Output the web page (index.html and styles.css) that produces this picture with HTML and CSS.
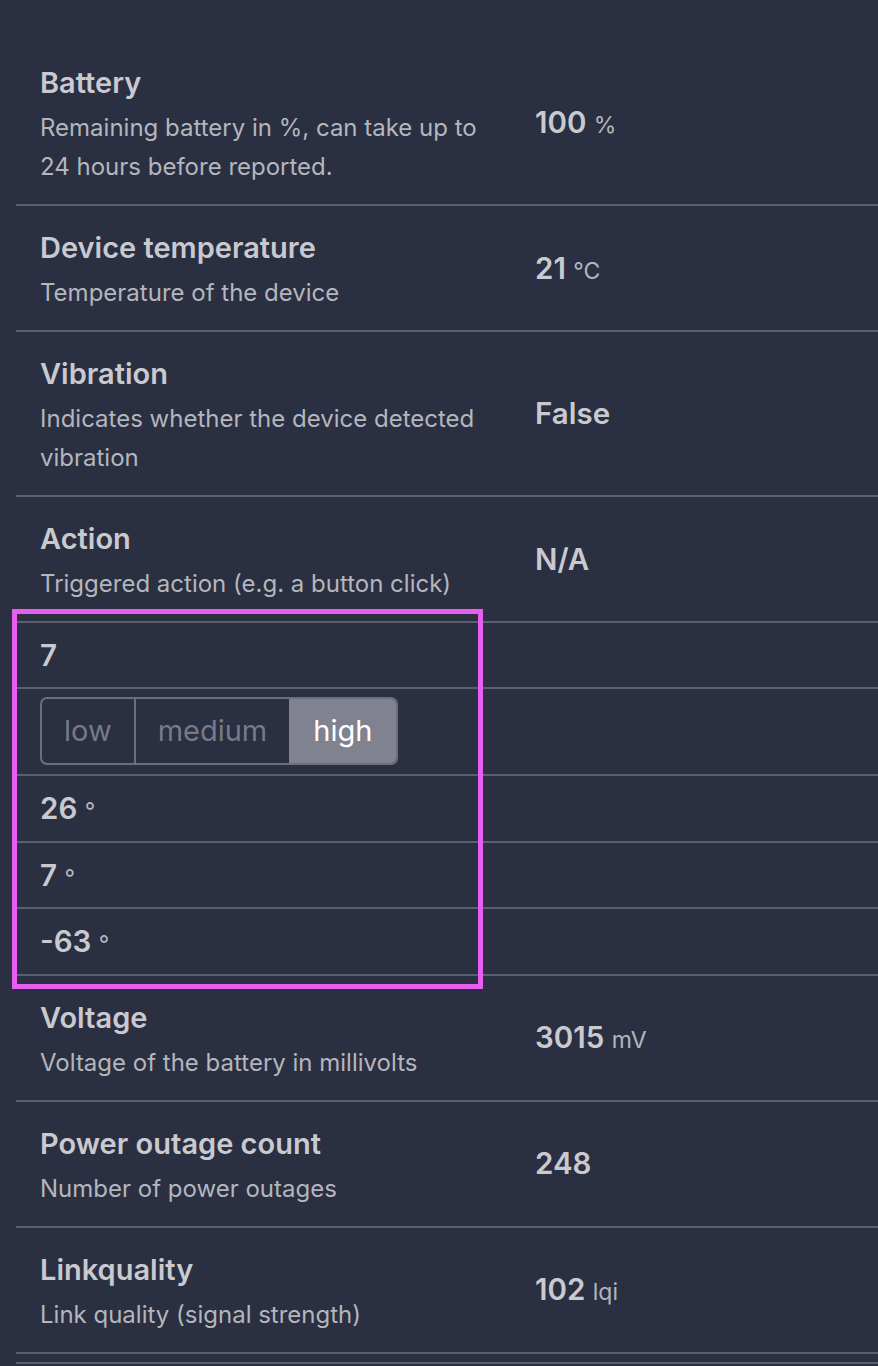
FILE: index.html
```html
<!DOCTYPE html>
<html>
<head>
<meta charset="utf-8">
<link rel="stylesheet" href="styles.css">
</head>
<body>
<div class="page">
  <div class="list">
    <div class="row">
      <div class="info">
        <div class="title">Battery</div>
        <div class="desc">Remaining battery in %, can take up to 24 hours before reported.</div>
      </div>
      <div class="value">100 <span class="unit">%</span></div>
    </div>
    <div class="row">
      <div class="info">
        <div class="title">Device temperature</div>
        <div class="desc">Temperature of the device</div>
      </div>
      <div class="value">21 <span class="unit">°C</span></div>
    </div>
    <div class="row">
      <div class="info">
        <div class="title">Vibration</div>
        <div class="desc">Indicates whether the device detected vibration</div>
      </div>
      <div class="value">False</div>
    </div>
    <div class="row">
      <div class="info">
        <div class="title">Action</div>
        <div class="desc">Triggered action (e.g. a button click)</div>
      </div>
      <div class="value">N/A</div>
    </div>
    <div class="row compact">
      <div class="value">7</div>
    </div>
    <div class="row compact toggle-row">
      <div class="seg">
        <span class="seg-btn">low</span>
        <span class="seg-btn">medium</span>
        <span class="seg-btn active">high</span>
      </div>
    </div>
    <div class="row compact deg">
      <div class="value">26 <span class="unit">°</span></div>
    </div>
    <div class="row compact deg">
      <div class="value">7 <span class="unit">°</span></div>
    </div>
    <div class="row compact deg">
      <div class="value">-63 <span class="unit">°</span></div>
    </div>
    <div class="row">
      <div class="info">
        <div class="title">Voltage</div>
        <div class="desc">Voltage of the battery in millivolts</div>
      </div>
      <div class="value">3015 <span class="unit">mV</span></div>
    </div>
    <div class="row">
      <div class="info">
        <div class="title">Power outage count</div>
        <div class="desc">Number of power outages</div>
      </div>
      <div class="value">248</div>
    </div>
    <div class="row">
      <div class="info">
        <div class="title">Linkquality</div>
        <div class="desc">Link quality (signal strength)</div>
      </div>
      <div class="value">102 <span class="unit">lqi</span></div>
    </div>
    <div class="tail"></div>
  </div>
  <div class="highlight"></div>
</div>
</body>
</html>
```
FILE: styles.css
```css
html, body {
  margin: 0;
  padding: 0;
  background: #2b2f42;
}
body {
  font-family: Inter, "Noto Sans", "Liberation Sans", sans-serif;
  color: #c8c9cf;
  overflow: hidden;
}
.page {
  position: relative;
  height: 1366px;
}
.list {
  padding-top: 41px;
  margin-left: 16px;
}
.row {
  display: grid;
  grid-template-columns: 450px auto;
  column-gap: 45px;
  align-items: center;
  padding: 22px 24px 18px;
  border-bottom: 2px solid #5b5e6b;
}
.title {
  font-size: 29px;
  font-weight: 600;
  line-height: 40px;
  margin-bottom: 5px;
  color: #c9cacf;
}
.desc {
  font-size: 24px;
  line-height: 39px;
  color: #b4b6bd;
}
.value {
  font-size: 29.5px;
  font-weight: 600;
  line-height: 40px;
  color: #c9cacf;
  white-space: nowrap;
}
.info + .value {
  margin-bottom: 5px;
}
.unit {
  font-size: 23px;
  font-weight: 400;
  line-height: 1;
  color: #b4b6bd;
}
.row.compact {
  padding: 12px 24px 12px;
}
.row.compact.deg {
  padding-bottom: 12.67px;
}
.row.toggle-row {
  padding: 8px 24px 9px;
}
.seg {
  display: inline-flex;
  border: 2px solid #6b6e7b;
  border-radius: 7px;
  overflow: hidden;
  justify-self: start;
}
.seg-btn {
  display: block;
  height: 64px;
  line-height: 64px;
  font-size: 29px;
  color: #777a87;
  padding: 0 22px;
}
.seg-btn + .seg-btn {
  border-left: 2px solid #6b6e7b;
}
.seg-btn.active {
  background: #80838f;
  color: #ffffff;
  border-left: none;
  padding: 0 24px;
}
.tail {
  margin-top: 8px;
  border-top: 2px solid #5b5e6b;
}
.highlight {
  position: absolute;
  left: 12px;
  top: 609px;
  width: 461px;
  height: 370px;
  border: 5px solid #e85ef1;
  pointer-events: none;
}
```
